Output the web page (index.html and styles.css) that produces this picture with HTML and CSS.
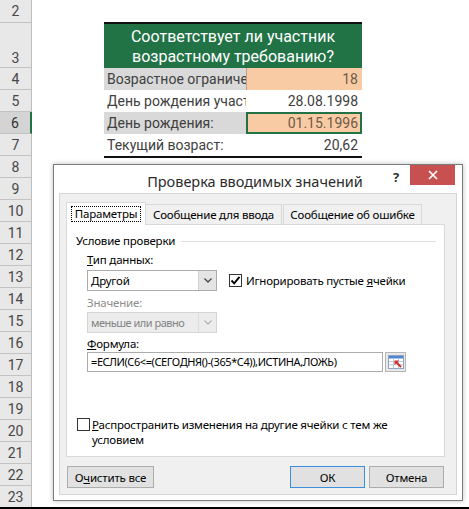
FILE: index.html
```html
<!DOCTYPE html>
<html lang="ru">
<head>
<meta charset="utf-8">
<title>Проверка вводимых значений</title>
<link rel="stylesheet" href="styles.css">
</head>
<body>
<div class="screen">
  <div class="headers">
    <div class="rh r2">2</div>
    <div class="rh r3">3</div>
    <div class="rh">4</div>
    <div class="rh">5</div>
    <div class="rh sel">6</div>
    <div class="rh">7</div>
    <div class="rh">8</div>
    <div class="rh">9</div>
    <div class="rh">10</div>
    <div class="rh">11</div>
    <div class="rh">12</div>
    <div class="rh">13</div>
    <div class="rh">14</div>
    <div class="rh">15</div>
    <div class="rh">16</div>
    <div class="rh">17</div>
    <div class="rh">18</div>
    <div class="rh">19</div>
    <div class="rh">20</div>
    <div class="rh">21</div>
    <div class="rh">22</div>
    <div class="rh r23">23</div>
  </div>
  <div class="canvas">
    <div class="table">
      <div class="thead">Соответствует ли участник<br>возрастному требованию?</div>
      <div class="trow shade">
        <div class="cb">Возрастное ограничение</div>
        <div class="cc input">18</div>
      </div>
      <div class="trow">
        <div class="cb">День рождения участника:</div>
        <div class="cc">28.08.1998</div>
      </div>
      <div class="trow shade">
        <div class="cb">День рождения:</div>
        <div class="cc input selected">01.15.1996</div>
      </div>
      <div class="trow">
        <div class="cb">Текущий возраст:</div>
        <div class="cc">20,62</div>
      </div>
    </div>

    <div class="dialog">
      <div class="titlebar">
        <div class="title">Проверка вводимых значений</div>
        <div class="help">?</div>
        <div class="close">
          <svg width="10" height="10" viewBox="0 0 10 10"><path d="M1 1L9 9M9 1L1 9" stroke="#fff" stroke-width="1.7"/></svg>
        </div>
      </div>
      <div class="client">
        <div class="tabs">
          <div class="tab active"><span class="focus">Параметры</span></div>
          <div class="tab t2">Сообщение для ввода</div>
          <div class="tab t3">Сообщение об ошибке</div>
        </div>
        <div class="panel">
          <div class="legend"><span>Условие проверки</span><span class="line"></span></div>
          <div class="group">
            <div class="lbl"><u>Т</u>ип данных:</div>
            <div class="row1">
              <div class="combo">
                <div class="val">Другой</div>
                <div class="drop"><svg width="8" height="5" viewBox="0 0 8 5"><path d="M0.5 0.5L4 4L7.5 0.5" fill="none" stroke="#444" stroke-width="1.3"/></svg></div>
              </div>
              <div class="chk on"><svg width="11" height="11" viewBox="0 0 11 11"><path d="M1.5 5.5L4.2 8.3L9.5 1.8" fill="none" stroke="#000" stroke-width="1.9"/></svg></div>
              <div class="chklbl">Игнорировать пустые <u>я</u>чейки</div>
            </div>
            <div class="lbl dim">Значение:</div>
            <div class="row2">
              <div class="combo dis">
                <div class="val">меньше или равно</div>
                <div class="drop"><svg width="8" height="5" viewBox="0 0 8 5"><path d="M0.5 0.5L4 4L7.5 0.5" fill="none" stroke="#b5b5b5" stroke-width="1.3"/></svg></div>
              </div>
            </div>
            <div class="lbl"><u>Ф</u>ормула:</div>
            <div class="frow">
              <div class="finput">=ЕСЛИ(C6&lt;=(СЕГОДНЯ()-(365*C4)),ИСТИНА,ЛОЖЬ)</div>
              <div class="refbtn">
                <svg width="16" height="14" viewBox="0 0 16 14">
                  <rect x="0.5" y="0.5" width="15" height="13" fill="#fff" stroke="#8ea3c2"/>
                  <rect x="1" y="1" width="14" height="2.5" fill="#4f86cf"/>
                  <path d="M1 6.5h14M1 9.8h14M5.5 3.5v10M10.5 3.5v10" stroke="#b9cae2" stroke-width="1"/>
                  <path d="M13 12L8 7" stroke="#d42a2a" stroke-width="2"/>
                  <path d="M6.5 5.5h4.5L6.5 10z" fill="#d42a2a"/>
                </svg>
              </div>
            </div>
          </div>
          <div class="crow">
            <div class="chk"></div>
            <div class="clbl"><u>Р</u>аспространить изменения на другие ячейки с тем же<br>условием</div>
          </div>
        </div>
        <div class="buttons">
          <div class="btn clear">О<u>ч</u>истить все</div>
          <div class="btn ok">ОК</div>
          <div class="btn cancel">Отмена</div>
        </div>
      </div>
    </div>
  </div>
</div>
<div class="edge"></div>
</body>
</html>
```
FILE: styles.css
```css
* { box-sizing: border-box; }
html, body { margin: 0; padding: 0; }
body {
  width: 469px;
  height: 509px;
  overflow: hidden;
  background: #fff;
  font-family: Roboto, "Noto Sans", sans-serif;
}
.screen { display: flex; height: 507px; overflow: hidden; }
.edge { height: 2px; background: #000; }

/* row headers */
.headers { width: 32px; flex: none; display: flex; flex-direction: column; }
.rh {
  height: 22px;
  flex: none;
  background: #e8e8e8;
  border-bottom: 1px solid #c3c3c3;
  border-right: 1px solid #bdbdbd;
  display: flex;
  align-items: center;
  justify-content: center;
  font-size: 14px;
  color: #474747;
}
.rh.r2 { height: 23px; }
.rh.r3 { height: 45px; align-items: flex-end; line-height: 18px; }
.rh.r23 { height: 21px; border-bottom: none; }
.rh.sel { background: #d4d4d4; border-right: 2px solid #217346; color: #333; }

/* sheet area */
.canvas { flex: 1; display: flex; flex-direction: column; min-width: 0; }
.table {
  margin: 22px 0 0 72px;
  width: 258px;
  border-top: 2px solid #111;
  border-bottom: 2px solid #111;
}
.thead {
  height: 44px;
  background: #217346;
  color: #fff;
  font-size: 16px;
  line-height: 20px;
  padding-top: 3px;
  text-align: center;
}
.trow { display: flex; height: 22px; font-size: 14px; line-height: 22px; color: #404040; }
.cb { width: 142px; flex: none; padding-left: 3px; white-space: nowrap; overflow: hidden; }
.cc { width: 116px; flex: none; text-align: right; padding-right: 4px; white-space: nowrap; }
.shade .cb { background: #d9d9d9; }
.input { background: #f8cba4; color: #6d5a48; border-left: 1px solid #b9a18a; }
.input.selected { border: 2px solid #217346; line-height: 18px; padding-right: 2px; }

/* dialog */
.dialog {
  margin: 6px 0 0 21px;
  width: 410px;
  height: 337px;
  flex: none;
  border: 1px solid #7b7b7b;
  background: #fff;
  display: flex;
  flex-direction: column;
  font-family: "Noto Sans", "Open Sans", sans-serif;
  font-size: 11.5px;
  letter-spacing: -0.2px;
  color: #000;
  box-shadow: 0 0 5px rgba(0,0,0,0.25);
}
.titlebar { height: 28px; flex: none; display: flex; letter-spacing: 0; }
.title {
  flex: 1;
  text-align: center;
  padding: 7px 0 0 72px;
  font-size: 14.5px;
  line-height: 18px;
  color: #2b2b2b;
  white-space: nowrap;
}
.help {
  width: 24px;
  text-align: center;
  font-weight: bold;
  font-size: 13px;
  line-height: 16px;
  padding-top: 4px;
  color: #333;
}
.close {
  width: 45px;
  height: 20px;
  margin: 0 7px 0 2px;
  background: #c75050;
  display: flex;
  align-items: center;
  justify-content: center;
}
.client {
  flex: 1;
  margin: 0 5px 5px;
  background: #f0f0f0;
  border: 1px solid #d4d4d4;
  padding: 8px 11px 0 6px;
  display: flex;
  flex-direction: column;
}
.tabs { display: flex; align-items: flex-end; height: 22px; flex: none; }
.tab {
  height: 20px;
  border: 1px solid #d9d9d9;
  border-bottom: none;
  background: #f0f0f0;
  display: flex;
  align-items: center;
  justify-content: center;
  line-height: 16px;
  white-space: nowrap;
}
.tab.active {
  position: relative;
  height: 23px;
  margin-bottom: -1px;
  width: 80px;
  background: #fff;
}
.tab.t2 { width: 136px; border-left: none; }
.tab.t3 { width: 139px; border-left: 1px solid #d9d9d9; margin-left: 1px; }
.focus { outline: 1px dotted #000; padding: 0 3px; line-height: 14px; }

.panel {
  height: 233px;
  flex: none;
  border: 1px solid #d9d9d9;
  background: #fff;
  padding: 8px 0 0 9px;
  display: flex;
  flex-direction: column;
}
.legend { display: flex; align-items: center; height: 16px; line-height: 16px; }
.legend .line { flex: 1; height: 1px; background: #dcdcdc; margin: 0 8px 0 6px; }
.group { margin-left: 11px; display: flex; flex-direction: column; }
.lbl { line-height: 16px; margin-top: 3px; }
.lbl.dim { color: #8d8d8d; margin-top: 4px; }
.row1 { display: flex; align-items: center; margin-top: 2px; }
.row2 { display: flex; margin-top: 1px; }
.combo {
  width: 130px;
  height: 21px;
  border: 1px solid #acacac;
  background: #fff;
  display: flex;
}
.combo .val { flex: 1; padding-left: 3px; line-height: 19px; white-space: nowrap; overflow: hidden; }
.combo .drop {
  width: 18px;
  flex: none;
  background: #e5e5e5;
  border-left: 1px solid #d0d0d0;
  display: flex;
  align-items: center;
  justify-content: center;
}
.combo.dis { border-color: #d5d5d5; background: #ececec; color: #838383; }
.combo.dis .val { font-size: 11px; letter-spacing: -0.5px; }
.combo.dis .drop { background: #ececec; border-left-color: #dcdcdc; }
.chk {
  width: 13px;
  height: 13px;
  flex: none;
  border: 1px solid #333;
  background: #fff;
  display: flex;
  align-items: center;
  justify-content: center;
}
.chk.on { margin-left: 12px; }
.chklbl { margin-left: 4px; line-height: 16px; white-space: nowrap; }
.frow { display: flex; height: 20px; margin-top: 0; }
.finput {
  width: 296px;
  height: 20px;
  border: 1px solid #acacac;
  background: #fff;
  padding-left: 3px;
  line-height: 18px;
  white-space: nowrap;
  overflow: hidden;
  font-size: 11px;
  letter-spacing: -0.4px;
}
.refbtn {
  width: 21px;
  height: 20px;
  margin-left: 2px;
  border: 1px solid #b5b5b5;
  background: #e8e8e8;
  display: flex;
  align-items: center;
  justify-content: center;
}
.crow { display: flex; align-items: flex-start; margin-top: 45px; margin-left: 1px; }
.crow .chk { margin-top: 1px; }
.clbl { margin-left: 2px; line-height: 15px; }

.buttons { display: flex; margin-top: 9px; height: 22px; flex: none; }
.btn {
  height: 22px;
  border: 1px solid #adadad;
  background: #e1e1e1;
  display: flex;
  align-items: center;
  justify-content: center;
  white-space: nowrap;
}
.btn.clear { width: 87px; margin-left: 1px; }
.btn.ok { width: 75px; margin-left: auto; border-color: #3c8fdc; }
.btn.cancel { width: 75px; margin-left: 4px; margin-right: 1px; }
```
